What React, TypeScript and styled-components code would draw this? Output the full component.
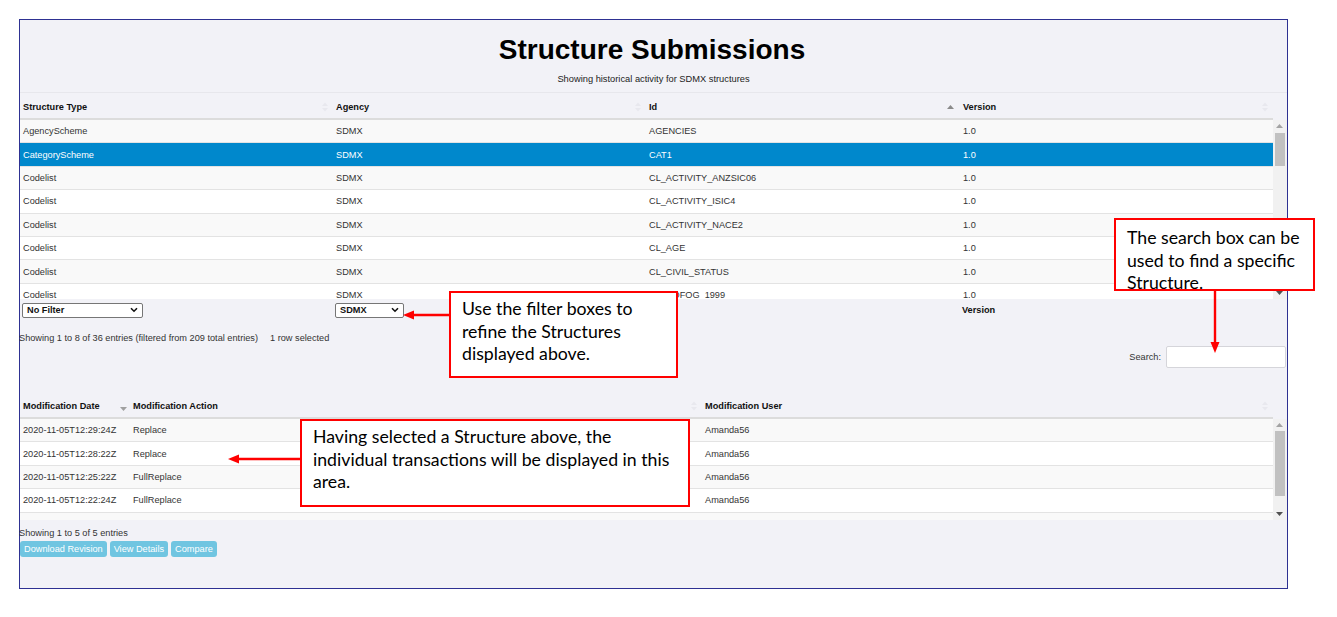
import React from 'react';
import styled, {createGlobalStyle} from "styled-components";

const GlobalStyle = createGlobalStyle`
    html, body {
        margin: 0;
        padding: 0;
        background: #ffffff;
        font-family: "Liberation Sans", Arial, sans-serif;
    }
    * {
        box-sizing: border-box;
    }
`;

type Column = {
    title: string;
    sort?: "none" | "asc" | "desc";
};

type TableProps = {
    cols: string;
    columns: Column[];
    rows: string[][];
    selected?: number;
    bodyHeight: number;
    thumbTop: number;
    thumbHeight: number;
    footer?: React.ReactNode;
};

const structureRows = [
    ["AgencyScheme", "SDMX", "AGENCIES", "1.0"],
    ["CategoryScheme", "SDMX", "CAT1", "1.0"],
    ["Codelist", "SDMX", "CL_ACTIVITY_ANZSIC06", "1.0"],
    ["Codelist", "SDMX", "CL_ACTIVITY_ISIC4", "1.0"],
    ["Codelist", "SDMX", "CL_ACTIVITY_NACE2", "1.0"],
    ["Codelist", "SDMX", "CL_AGE", "1.0"],
    ["Codelist", "SDMX", "CL_CIVIL_STATUS", "1.0"],
    ["Codelist", "SDMX", "CL_COFOG_1999", "1.0"],
];

const revisionRows = [
    ["2020-11-05T12:29:24Z", "Replace", "Amanda56"],
    ["2020-11-05T12:28:22Z", "Replace", "Amanda56"],
    ["2020-11-05T12:25:22Z", "FullReplace", "Amanda56"],
    ["2020-11-05T12:22:24Z", "FullReplace", "Amanda56"],
    ["2020-10-30T15:31:30Z", "Replace", "Amanda56"],
];

const SortIcon: React.FC<{ sort: "none" | "asc" | "desc" }> = ({sort}) => {
    if (sort === "asc") {
        return (
            <SortMark $color="#8a8a8a" $right={6}>
                <svg width="7" height="5" viewBox="0 0 7 5"><path d="M0 4.5 L3.5 0.5 L7 4.5 Z" fill="currentColor"/></svg>
            </SortMark>
        );
    }
    if (sort === "desc") {
        return (
            <SortMark $color="#a0a0a0" $right={3} $offset={3}>
                <svg width="7" height="5" viewBox="0 0 7 5"><path d="M0 0.5 L3.5 4.5 L7 0.5 Z" fill="currentColor"/></svg>
            </SortMark>
        );
    }
    return (
        <SortMark $color="#e8e8ee" $right={5}>
            <svg width="6" height="10" viewBox="0 0 6 10"><path d="M0 4 L3 0.5 L6 4 Z M0 6 L3 9.5 L6 6 Z" fill="currentColor"/></svg>
        </SortMark>
    );
};

const Scrollbar: React.FC<{ thumbTop: number; thumbHeight: number }> = ({thumbTop, thumbHeight}) => (
    <ScrollTrack>
        <ScrollArrow $top={4}>
            <svg width="7" height="4" viewBox="0 0 7 4"><path d="M0 4 L3.5 0 L7 4 Z" fill="#a3a3a3"/></svg>
        </ScrollArrow>
        <ScrollThumb style={{top: thumbTop, height: thumbHeight}}/>
        <ScrollArrow $bottom={4}>
            <svg width="7" height="4" viewBox="0 0 7 4"><path d="M0 0 L3.5 4 L7 0 Z" fill="#505050"/></svg>
        </ScrollArrow>
    </ScrollTrack>
);

const DataTable: React.FC<TableProps> = (props) => {
    const {cols, columns, rows, selected, bodyHeight, thumbTop, thumbHeight, footer} = props;
    return (
        <TableWrap>
            <HeadRow $cols={cols}>
                {columns.map((c) => (
                    <HeadCell key={c.title}>
                        {c.title}
                        <SortIcon sort={c.sort ?? "none"}/>
                    </HeadCell>
                ))}
            </HeadRow>
            <BodyArea style={{height: bodyHeight}}>
                <BodyRows>
                    {rows.map((r, i) => (
                        <BodyRow key={i} $cols={cols} $odd={i % 2 === 0} $selected={i === selected}>
                            {r.map((cell, j) => <BodyCell key={j}>{cell}</BodyCell>)}
                        </BodyRow>
                    ))}
                </BodyRows>
                <Scrollbar thumbTop={thumbTop} thumbHeight={thumbHeight}/>
            </BodyArea>
            {footer}
        </TableWrap>
    );
};

const FakeSelect: React.FC<{ label: string; width: number }> = ({label, width}) => (
    <SelectBox style={{width}}>
        <span>{label}</span>
        <svg width="8" height="6" viewBox="0 0 8 6"><path d="M1 1.2 L4 4.2 L7 1.2" stroke="#111" strokeWidth="1.6" fill="none"/></svg>
    </SelectBox>
);

const Arrow: React.FC<{ x: number; y: number; w: number; h: number; dir: "left" | "down" }> = ({x, y, w, h, dir}) => (
    <ArrowLayer $x={x} $y={y} width={w} height={h} viewBox={`0 0 ${w} ${h}`}>
        {dir === "left" ? (
            <>
                <line x1={w} y1={h / 2} x2={9} y2={h / 2} stroke="#ff0000" strokeWidth="2.4"/>
                <path d={`M0 ${h / 2} L11 ${h / 2 - 4.5} L11 ${h / 2 + 4.5} Z`} fill="#ff0000"/>
            </>
        ) : (
            <>
                <line x1={w / 2} y1={0} x2={w / 2} y2={h - 9} stroke="#ff0000" strokeWidth="2.4"/>
                <path d={`M${w / 2} ${h} L${w / 2 - 4.5} ${h - 11} L${w / 2 + 4.5} ${h - 11} Z`} fill="#ff0000"/>
            </>
        )}
    </ArrowLayer>
);

const Note: React.FC<{ x: number; y: number; w: number; h: number; pad: number; lines: string[] }> = (props) => (
    <Callout $x={props.x} $y={props.y} $w={props.w} $h={props.h} $pad={props.pad}>
        {props.lines.map((l) => <NoteLine key={l}>{l}</NoteLine>)}
    </Callout>
);

export default function App() {
    return (
        <Page>
            <GlobalStyle/>
            <Frame>
                <TitleBlock>
                    <Title>Structure Submissions</Title>
                    <Subtitle>Showing historical activity for SDMX structures</Subtitle>
                </TitleBlock>
                <DataTable
                    cols="313px 313px 314px 1fr"
                    columns={[
                        {title: "Structure Type"},
                        {title: "Agency"},
                        {title: "Id", sort: "asc"},
                        {title: "Version"},
                    ]}
                    rows={structureRows}
                    selected={1}
                    bodyHeight={179}
                    thumbTop={13}
                    thumbHeight={33}
                    footer={
                        <FootRow $cols="313px 313px 314px 1fr">
                            <FootCell><FakeSelect label="No Filter" width={121}/></FootCell>
                            <FootCell><FakeSelect label="SDMX" width={69}/></FootCell>
                            <FootCell/>
                            <FootCell><b>Version</b></FootCell>
                        </FootRow>
                    }
                />
                <InfoText $top={11}>
                    Showing 1 to 8 of 36 entries (filtered from 209 total entries)
                    <Selected>1 row selected</Selected>
                </InfoText>
                <SearchRow>
                    <label>Search:</label>
                    <SearchInput/>
                </SearchRow>
                <SecondTable>
                    <DataTable
                        cols="110px 572px 1fr"
                        columns={[
                            {title: "Modification Date", sort: "desc"},
                            {title: "Modification Action"},
                            {title: "Modification User"},
                        ]}
                        rows={revisionRows}
                        bodyHeight={101}
                        thumbTop={12}
                        thumbHeight={65}
                    />
                </SecondTable>
                <InfoText $top={7}>Showing 1 to 5 of 5 entries</InfoText>
                <ButtonRow>
                    <ActionButton>Download Revision</ActionButton>
                    <ActionButton>View Details</ActionButton>
                    <ActionButton>Compare</ActionButton>
                </ButtonRow>
            </Frame>

            <Note x={449} y={291} w={229} h={87} pad={5}
                  lines={["Use the filter boxes to", "refine the Structures", "displayed above."]}/>
            <Arrow x={403} y={309} w={47} h={12} dir="left"/>

            <Note x={1114} y={218} w={201} h={73} pad={7}
                  lines={["The search box can be", "used to find a specific", "Structure."]}/>
            <Arrow x={1209} y={290} w={12} h={63} dir="down"/>

            <Note x={300} y={419} w={390} h={88} pad={5}
                  lines={["Having selected a Structure above, the", "individual transactions will be displayed in this", "area."]}/>
            <Arrow x={228} y={453} w={73} h={12} dir="left"/>
        </Page>
    );
}

const Page = styled.div`
    position: relative;
    width: 1337px;
    height: 617px;
    padding: 19px 0 0 19px;
    overflow: hidden;
`;
const Frame = styled.div`
    width: 1269px;
    height: 570px;
    border: 1px solid #2e3192;
    background: #f2f2f7;
    display: flex;
    flex-direction: column;
    color: #333333;
    font-size: 9.2px;
`;
const TitleBlock = styled.div`
    height: 73px;
    border-bottom: 1px solid #e7e7ec;
    text-align: center;
    padding-top: 14px;
`;
const Title = styled.h1`
    margin: 0;
    font-size: 28px;
    line-height: 32px;
    font-weight: bold;
    color: #000000;
    padding-right: 3px;
`;
const Subtitle = styled.div`
    margin-top: 7px;
    font-size: 9.3px;
    line-height: 12px;
    color: #222222;
`;
const TableWrap = styled.div`
    display: flex;
    flex-direction: column;
`;
const HeadRow = styled.div<{ $cols: string }>`
    display: grid;
    grid-template-columns: ${p => p.$cols};
    height: 27px;
    margin-right: 14px;
    border-bottom: 2px solid #dcdcdc;
    padding-top: 3px;
    align-items: center;
`;
const HeadCell = styled.div`
    position: relative;
    padding-left: 3px;
    font-weight: bold;
    color: #111111;
`;
const SortMark = styled.span<{ $color: string; $right: number; $offset?: number }>`
    position: absolute;
    right: ${p => p.$right}px;
    top: 50%;
    transform: translateY(calc(-50% + ${p => p.$offset ?? 0}px));
    color: ${p => p.$color};
    display: flex;
`;
const BodyArea = styled.div`
    display: flex;
    overflow: hidden;
`;
const BodyRows = styled.div`
    flex: 1;
    overflow: hidden;
`;
const BodyRow = styled.div<{ $cols: string; $odd: boolean; $selected: boolean }>`
    display: grid;
    grid-template-columns: ${p => p.$cols};
    height: 23.4px;
    align-items: center;
    border-bottom: 1px solid #e3e3e3;
    background: ${p => p.$selected ? "#0088cc" : p.$odd ? "#f9f9f9" : "#ffffff"};
    color: ${p => p.$selected ? "#ffffff" : "#333333"};
`;
const BodyCell = styled.div`
    padding-left: 3px;
    white-space: nowrap;
`;
const ScrollTrack = styled.div`
    position: relative;
    width: 14px;
    background: #f1f1f1;
`;
const ScrollArrow = styled.div<{ $top?: number; $bottom?: number }>`
    position: absolute;
    left: 3px;
    ${p => p.$top !== undefined ? `top: ${p.$top}px;` : ""}
    ${p => p.$bottom !== undefined ? `bottom: ${p.$bottom}px;` : ""}
    display: flex;
`;
const ScrollThumb = styled.div`
    position: absolute;
    left: 2px;
    width: 10px;
    background: #c1c1c1;
`;
const FootRow = styled.div<{ $cols: string }>`
    display: grid;
    grid-template-columns: ${p => p.$cols};
    height: 22px;
    margin-right: 14px;
    align-items: center;
    color: #111111;
`;
const FootCell = styled.div`
    padding-left: 2px;
`;
const SelectBox = styled.div`
    height: 15px;
    border: 1px solid #767676;
    border-radius: 2px;
    background: #ffffff;
    display: flex;
    align-items: center;
    justify-content: space-between;
    padding: 0 4px 0 4px;
    font-weight: bold;
    color: #111111;
    font-size: 9.2px;
`;
const InfoText = styled.div<{ $top: number }>`
    margin-top: ${p => p.$top}px;
    line-height: 12px;
    color: #333333;
    margin-left: -1px;
`;
const Selected = styled.span`
    margin-left: 12px;
`;
const SearchRow = styled.div`
    margin-top: 2px;
    display: flex;
    justify-content: flex-end;
    align-items: center;
    gap: 5px;
    padding-right: 1px;
    color: #333333;
`;
const SearchInput = styled.div`
    width: 120px;
    height: 22px;
    border: 1px solid #d5d5da;
    border-radius: 2px;
    background: #ffffff;
`;
const SecondTable = styled.div`
    margin-top: 24px;
`;
const ButtonRow = styled.div`
    margin-top: 2px;
    display: flex;
    gap: 3px;
`;
const ActionButton = styled.button`
    height: 16px;
    padding: 0 4px;
    border: none;
    border-radius: 3px;
    background: #70c5e1;
    color: #ffffff;
    font-family: "Liberation Sans", Arial, sans-serif;
    font-size: 9.2px;
    line-height: 16px;
`;
const Callout = styled.div<{ $x: number; $y: number; $w: number; $h: number; $pad: number }>`
    position: absolute;
    left: ${p => p.$x}px;
    top: ${p => p.$y}px;
    width: ${p => p.$w}px;
    height: ${p => p.$h}px;
    border: 2px solid #ff0000;
    background: #ffffff;
    padding: ${p => p.$pad}px 4px 0 11px;
    font-family: Lato, "Open Sans", sans-serif;
    font-size: 17.7px;
    line-height: 22.5px;
    color: #000000;
`;
const NoteLine = styled.div`
    white-space: nowrap;
`;
const ArrowLayer = styled.svg<{ $x: number; $y: number }>`
    position: absolute;
    left: ${p => p.$x}px;
    top: ${p => p.$y}px;
    overflow: visible;
`;
